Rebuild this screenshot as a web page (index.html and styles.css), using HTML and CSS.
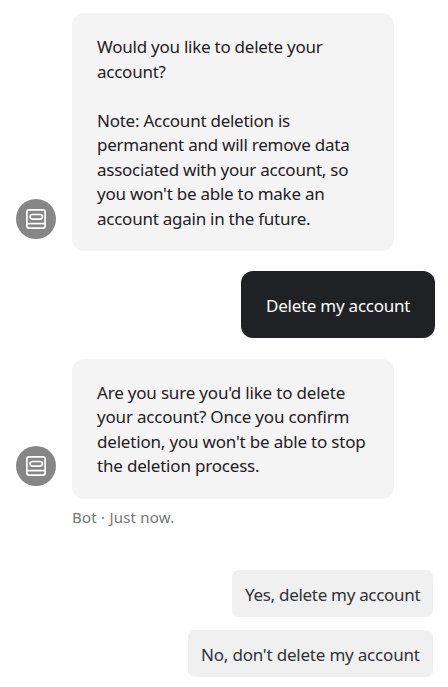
FILE: index.html
```html
<!DOCTYPE html>
<html lang="en">
<head>
    <meta charset="UTF-8" />
    <title>Chat</title>
    <link rel="stylesheet" href="styles.css">
</head>
<body>
    <div class="chat">
        <div class="row">
            <div class="avatar">
                <svg width="22" height="22" viewBox="0 0 22 22">
                    <rect x="1.9" y="1.9" width="18.2" height="18.2" rx="2" />
                    <rect x="5" y="6.5" width="12.4" height="4.6" rx="2.3" />
                    <path d="M2 15.6h18" />
                </svg>
            </div>
            <div class="bubble">
                <p>Would you like to delete your<br>account?</p>
                <p>Note: Account deletion is<br>permanent and will remove data<br>associated with your account, so<br>you won't be able to make an<br>account again in the future.</p>
            </div>
        </div>
        <div class="bubble user">Delete my account</div>
        <div class="row last">
            <div class="avatar">
                <svg width="22" height="22" viewBox="0 0 22 22">
                    <rect x="1.9" y="1.9" width="18.2" height="18.2" rx="2" />
                    <rect x="5" y="6.5" width="12.4" height="4.6" rx="2.3" />
                    <path d="M2 15.6h18" />
                </svg>
            </div>
            <div class="bubble">
                <p>Are you sure you'd like to delete<br>your account? Once you confirm<br>deletion, you won't be able to stop<br>the deletion process.</p>
            </div>
        </div>
        <div class="meta">Bot · Just now.</div>
        <div class="replies">
            <button class="reply yes">Yes, delete my account</button>
            <button class="reply no">No, don't delete my account</button>
        </div>
    </div>
</body>
</html>
```
FILE: styles.css
```css
* {
    margin: 0;
    padding: 0;
    box-sizing: border-box;
}
body {
    background-color: #fff;
    color: #1e2023;
    font: 17px/24.5px "Noto Sans", "Open Sans", sans-serif;
    letter-spacing: -.25px;
}
.chat {
    display: flex;
    flex-direction: column;
    padding: 13px 13px 0 16px;
}
.row {
    display: flex;
    align-items: flex-end;
}
.avatar {
    display: flex;
    align-items: center;
    justify-content: center;
    width: 40px;
    height: 40px;
    margin: 0 16px 12px 0;
    border-radius: 50%;
    background-color: #868686;
}
.last .avatar {
    margin-bottom: 13px;
}
.avatar svg {
    fill: none;
    stroke: #fff;
    stroke-width: 1.7;
}
.bubble {
    width: 322px;
    padding: 22px 25px 20px;
    border-radius: 12px;
    background-color: #f4f4f4;
    white-space: nowrap;
}
.bubble p + p {
    margin-top: 24.5px;
}
.last .bubble {
    padding-top: 21.5px;
    padding-bottom: 20.5px;
    letter-spacing: -.19px;
}
.user {
    align-self: flex-end;
    width: 194px;
    height: 67px;
    margin: 20px 0 21px;
    padding-top: 23px;
    background-color: #202124;
    color: #fff;
}
.meta {
    margin: 8px 0 0 56px;
    color: #757575;
    font-size: 15px;
    line-height: 20px;
    letter-spacing: .22px;
}
.replies {
    display: flex;
    flex-direction: column;
    align-items: flex-end;
    gap: 13px;
    margin: 43px 2px 0 0;
}
.reply {
    height: 47px;
    padding: 4px 13px 0;
    border: 0;
    border-radius: 7px;
    background-color: #f0f0f0;
    color: #303236;
    font: inherit;
    letter-spacing: inherit;
    text-align: left;
    white-space: nowrap;
    cursor: pointer;
}
.yes {
    width: 201px;
    letter-spacing: -.3px;
}
.no {
    width: 245px;
    letter-spacing: -.2px;
}
```
